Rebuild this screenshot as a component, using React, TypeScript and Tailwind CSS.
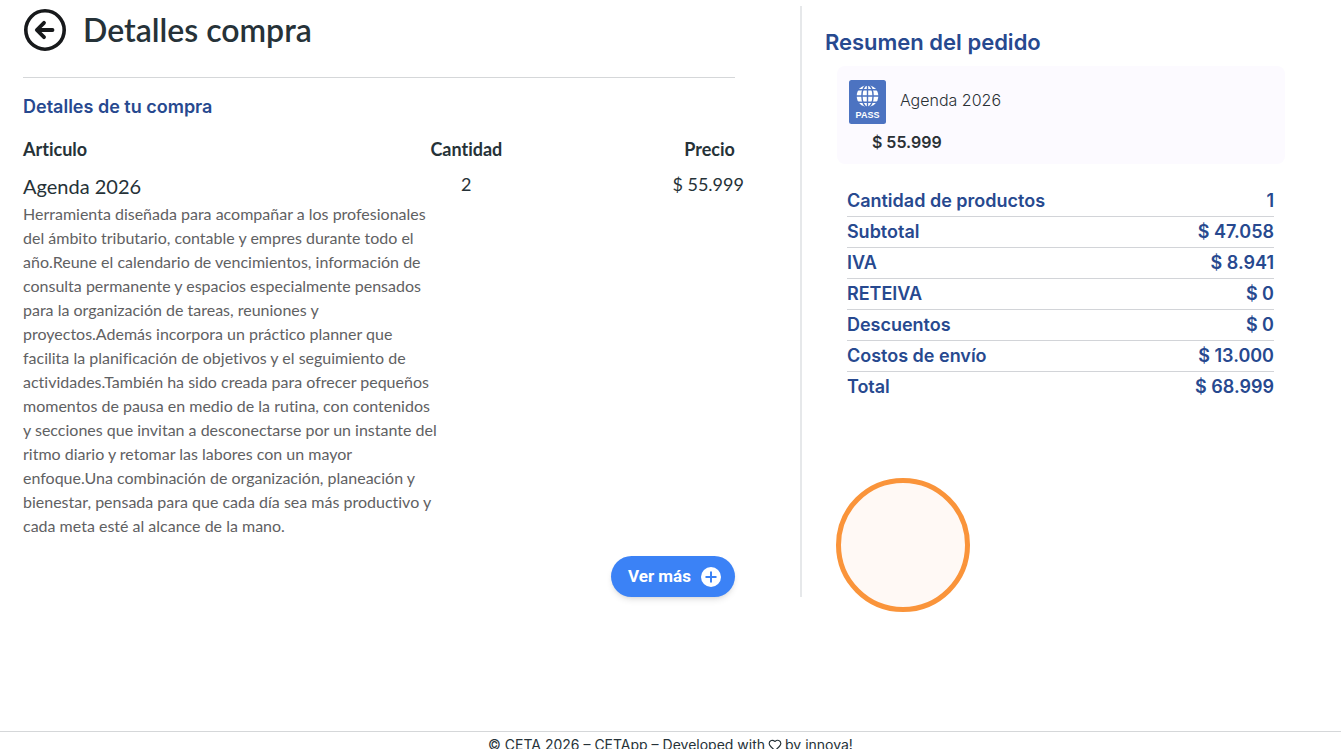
import { Heart } from "lucide-react";

const description = `Herramienta diseñada para acompañar a los profesionales
del ámbito tributario, contable y empres durante todo el
año.Reune el calendario de vencimientos, información de
consulta permanente y espacios especialmente pensados
para la organización de tareas, reuniones y
proyectos.Además incorpora un práctico planner que
facilita la planificación de objetivos y el seguimiento de
actividades.También ha sido creada para ofrecer pequeños
momentos de pausa en medio de la rutina, con contenidos
y secciones que invitan a desconectarse por un instante del
ritmo diario y retomar las labores con un mayor
enfoque.Una combinación de organización, planeación y
bienestar, pensada para que cada día sea más productivo y
cada meta esté al alcance de la mano.`;

const summary = [
  { label: "Cantidad de productos", value: "1" },
  { label: "Subtotal", value: "$ 47.058" },
  { label: "IVA", value: "$ 8.941" },
  { label: "RETEIVA", value: "$ 0" },
  { label: "Descuentos", value: "$ 0" },
  { label: "Costos de envío", value: "$ 13.000" },
  { label: "Total", value: "$ 68.999" },
];

function BackIcon() {
  return (
    <svg viewBox="0 0 44 44" className="size-11" fill="none" stroke="#17191b" strokeLinecap="round" strokeLinejoin="round">
      <circle cx="22" cy="22" r="19.2" strokeWidth="3.6" />
      <path d="M29.5 22H15M21 14.8L13.8 22l7.2 7.2" strokeWidth="3.8" />
    </svg>
  );
}

function PlusIcon() {
  return (
    <svg viewBox="0 0 20 20" className="size-5">
      <circle cx="10" cy="10" r="10" fill="#fff" />
      <path d="M10 4.5v11M4.5 10h11" stroke="#3b82f6" strokeWidth="2" />
    </svg>
  );
}

function PassIcon() {
  return (
    <svg viewBox="0 0 37 44" className="h-11 w-[37px] shrink-0" role="img" aria-label="Pass">
      <rect width="37" height="44" rx="2.5" fill="#4c73c1" />
      <circle cx="18.5" cy="16" r="10.8" fill="#fff" />
      <g fill="none" stroke="#4c73c1" strokeWidth="1.4">
        <ellipse cx="18.5" cy="16" rx="5.6" ry="11.2" />
        <path d="M18.5 5v22M7 16h23M9 9.8h19M9 22.2h19" />
      </g>
      <text x="18.5" y="37.8" textAnchor="middle" fill="#fff" fontSize="9" fontWeight="700" fontFamily="Liberation Sans, sans-serif">
        PASS
      </text>
    </svg>
  );
}

function PurchaseDetails() {
  return (
    <section className="w-[59.8%] border-r-2 border-[#e6e8ea] pl-[23px] pr-[65px] font-['Lato',sans-serif] text-[#263238] [font-variant-ligatures:none]">
      <header className="flex items-center gap-4 border-b border-[#d5d7d9] pb-[25px] pt-0.5">
        <button type="button" aria-label="Volver" className="cursor-pointer">
          <BackIcon />
        </button>
        <h1 className="text-[32px] font-semibold leading-11">Detalles compra</h1>
      </header>

      <h2 className="mt-[15px] font-['Inter',sans-serif] text-lg font-semibold leading-7 text-[#27498f]">
        Detalles de tu compra
      </h2>

      <table className="-mr-[9px] mt-3 w-[calc(100%+9px)] table-fixed">
        <thead>
          <tr className="h-8 text-lg leading-7">
            <th className="w-[49%] text-left font-bold">Articulo</th>
            <th className="w-[25%] text-center font-bold">Cantidad</th>
            <th className="pr-[9px] text-right font-bold">Precio</th>
          </tr>
        </thead>
        <tbody>
          <tr className="h-[37px] text-lg">
            <td className="pt-1 text-xl">Agenda 2026</td>
            <td className="text-center">2</td>
            <td className="text-right">$ 55.999</td>
          </tr>
          <tr>
            <td colSpan={3} className="whitespace-pre-line text-base text-[#5f6163]">
              {description}
            </td>
          </tr>
        </tbody>
      </table>

      <div className="mt-[18px] flex justify-end">
        <button
          type="button"
          className="flex h-[41px] cursor-pointer items-center gap-2.5 rounded-full bg-[#3b82f6] pl-[17px] pr-3.5 font-['Roboto',sans-serif] text-[17px] font-bold text-white shadow-md"
        >
          Ver más
          <PlusIcon />
        </button>
      </div>
    </section>
  );
}

function OrderSummary() {
  return (
    <section className="flex-1 pl-[23px] pr-14 pt-5 font-['Inter',sans-serif]">
      <h2 className="text-[22px] font-semibold leading-8 text-[#27498f]">Resumen del pedido</h2>

      <div className="ml-3 mt-2 rounded-lg bg-[#fcfaff] px-3 pb-2.5 pt-3.5 text-base text-[#2b3136]">
        <div className="flex items-start gap-3.5">
          <PassIcon />
          <span className="font-light leading-10">Agenda 2026</span>
        </div>
        <p className="ml-[23px] mt-1.5 font-semibold leading-6">$ 55.999</p>
      </div>

      <dl className="ml-[22px] mr-[11px] mt-[22px] text-lg font-semibold leading-[30px] text-[#27498f]">
        {summary.map((row) => (
          <div key={row.label} className="flex justify-between border-b border-[#d2d4d8] last:border-b-0">
            <dt>{row.label}</dt>
            <dd>{row.value}</dd>
          </div>
        ))}
      </dl>

      <div className="ml-[11px] mt-[76px] size-[134px] rounded-full border-5 border-[#fa943a] bg-[#fff9f5]" />
    </section>
  );
}

export default function App() {
  return (
    <div className="h-screen overflow-hidden bg-white">
      <main className="flex items-start pt-1.5">
        <PurchaseDetails />
        <OrderSummary />
      </main>
      <footer className="mt-[119px] flex items-center justify-center border-t border-[#d5d7d9] font-['Inter',sans-serif] text-sm leading-[26px] text-[#263238]">
        © CETA 2026 – CETApp – Developed with
        <Heart className="mx-[3px] size-3.5" strokeWidth={2} />
        by innova!
      </footer>
    </div>
  );
}
